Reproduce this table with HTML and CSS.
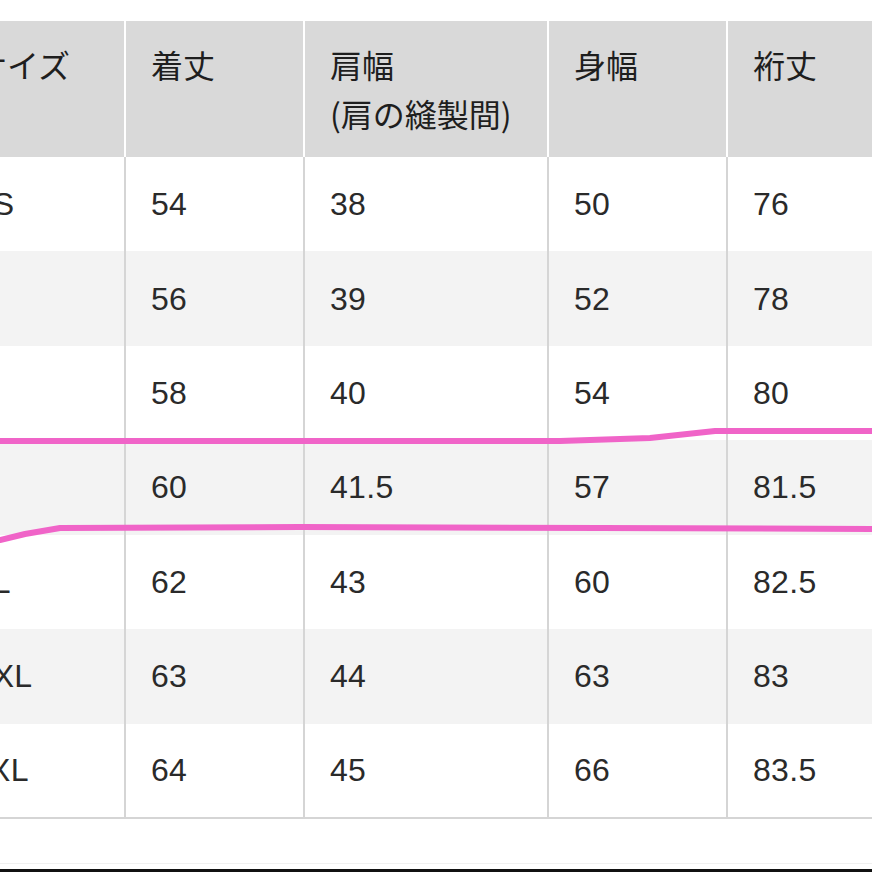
FILE: index.html
```html
<!DOCTYPE html>
<html lang="ja">
<head>
<meta charset="utf-8">
<link rel="stylesheet" href="styles.css">
</head>
<body>
<div class="page">
  <div class="frame">
    <table class="size-table">
      <colgroup>
        <col class="c-narrow"><col class="c-narrow"><col class="c-wide"><col class="c-narrow"><col class="c-narrow">
      </colgroup>
      <thead>
        <tr>
          <th class="first">サイズ</th>
          <th>着丈</th>
          <th>肩幅<br>(肩の縫製間)</th>
          <th>身幅</th>
          <th>裄丈</th>
        </tr>
      </thead>
      <tbody>
        <tr><td>XS</td><td>54</td><td>38</td><td>50</td><td>76</td></tr>
        <tr><td>S</td><td>56</td><td>39</td><td>52</td><td>78</td></tr>
        <tr><td>M</td><td>58</td><td>40</td><td>54</td><td>80</td></tr>
        <tr><td>L</td><td>60</td><td>41.5</td><td>57</td><td>81.5</td></tr>
        <tr><td>XL</td><td>62</td><td>43</td><td>60</td><td>82.5</td></tr>
        <tr><td>XXL</td><td>63</td><td>44</td><td>63</td><td>83</td></tr>
        <tr><td>3XL</td><td>64</td><td>45</td><td>66</td><td>83.5</td></tr>
      </tbody>
    </table>
  </div>
  <div class="footer-space"></div>
  <div class="edge"></div>
  <svg class="marker" width="872" height="872" viewBox="0 0 872 872">
    <polyline points="0,441 560,441 650,438 715,431 872,431" />
    <polyline points="0,540 25,534 60,528 300,527 600,528 872,529" />
  </svg>
</div>
</body>
</html>
```

FILE: styles.css
```css
html, body {
  margin: 0;
  padding: 0;
  background: #ffffff;
}

.page {
  position: relative;
  width: 872px;
  height: 872px;
  overflow: hidden;
  font-family: "Liberation Sans", "Noto Sans CJK JP", sans-serif;
  color: #222222;
}

.frame {
  padding-top: 21px;
  overflow: hidden;
}

.size-table {
  margin-left: -54px;
  border-collapse: collapse;
  table-layout: fixed;
  width: 960px;
}

.c-narrow { width: 179px; }
.c-wide { width: 244px; }

.size-table th {
  background: #d9d9d9;
  border-right: 2px solid #ffffff;
  height: 136px;
  box-sizing: border-box;
  padding: 19px 0 0 25px;
  text-align: left;
  vertical-align: top;
  font-family: "Noto Sans CJK JP", sans-serif;
  font-weight: 400;
  font-size: 32px;
  line-height: 49px;
  color: #1e1e1e;
}

.size-table th.first {
  padding-left: 29px;
}

.size-table td {
  height: 94.43px;
  box-sizing: border-box;
  padding: 0 0 0 25px;
  border-right: 2px solid #d5d5d5;
  vertical-align: middle;
  font-size: 32px;
  line-height: 36px;
  color: #2a2a2a;
  letter-spacing: 0.3px;
}

.size-table tbody tr:nth-child(even) td {
  background: #f3f3f3;
}

.size-table tbody tr:last-child td {
  border-bottom: 2px solid #d5d5d5;
}

.footer-space {
  height: 44px;
  border-bottom: 1px solid #f0f0f0;
}

.edge {
  position: absolute;
  left: 0;
  right: 0;
  bottom: 0;
  height: 3px;
  background: #111111;
}

.marker {
  position: absolute;
  left: 0;
  top: 0;
  pointer-events: none;
}

.marker polyline {
  fill: none;
  stroke: #f064c8;
  stroke-width: 6;
  stroke-linejoin: round;
  stroke-linecap: round;
}
```
